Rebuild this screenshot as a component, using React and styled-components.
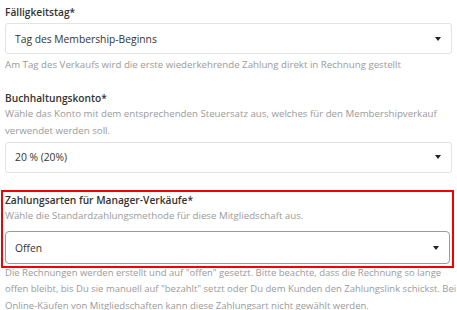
import React from "react";
import styled, { createGlobalStyle } from "styled-components";

const Global = createGlobalStyle`
  html, body { margin: 0; padding: 0; background: #fff; }
  body { font-family: "Open Sans", "Noto Sans", sans-serif; }
`;

const Page = styled.div`
  width: 457px;
  box-sizing: border-box;
  padding: 4px 5px 0 5px;
  display: flex;
  flex-direction: column;
`;

const Field = styled.section`
  display: flex;
  flex-direction: column;
  margin-top: ${(p) => p.$mt || 0}px;
  ${(p) =>
    p.$highlight &&
    `
    margin-left: -4px;
    margin-right: -2px;
    border: 2px solid #f00000;
    padding: 0 2px 2px 2px;
  `}
`;

const Label = styled.div`
  font-size: 10.2px;
  font-weight: 600;
  line-height: 16px;
  color: #333;
`;

const Desc = styled.div`
  font-size: 9.7px;
  line-height: 16.3px;
  color: #9a9a9a;
  margin-top: ${(p) => p.$mt || 0}px;
`;

const Hint = styled(Desc)`
  width: 452px;
  font-size: 9.5px;
`;

const SelectBox = styled.div`
  box-sizing: border-box;
  height: ${(p) => (p.$strong ? 33 : 31)}px;
  margin-top: ${(p) => p.$mt || 0}px;
  border: 1px solid ${(p) => (p.$strong ? "#9a9a9a" : "#e3e3e3")};
  border-radius: ${(p) => (p.$strong ? 4 : 3)}px;
  display: flex;
  align-items: center;
  justify-content: space-between;
  padding: 0 9px 0 9px;
  font-size: 10.3px;
  color: #333;
  background: #fff;
`;

const Caret = styled.span`
  width: 0;
  height: 0;
  border-left: 3.5px solid transparent;
  border-right: 3.5px solid transparent;
  border-top: 4px solid #222;
  margin-right: 1px;
`;

const Select = ({ value, strong, mt }) => (
  <SelectBox $strong={strong} $mt={mt}>
    <span>{value}</span>
    <Caret />
  </SelectBox>
);

export default function App() {
  return (
    <>
      <Global />
      <Page>
        <Field>
          <Label>Fälligkeitstag*</Label>
          <Select value="Tag des Membership-Beginns" mt={3} />
          <Desc $mt={3}>
            Am Tag des Verkaufs wird die erste wiederkehrende Zahlung direkt in
            Rechnung gestellt
          </Desc>
        </Field>
        <Field $mt={17}>
          <Label>Buchhaltungskonto*</Label>
          <Desc>
            Wähle das Konto mit dem entsprechenden Steuersatz aus, welches für
            den Membershipverkauf verwendet werden soll.
          </Desc>
          <Select value="20 % (20%)" mt={3} />
        </Field>
        <Field $mt={17} $highlight>
          <Label>Zahlungsarten für Manager-Verkäufe*</Label>
          <Desc>Wähle die Standardzahlungsmethode für diese Mitgliedschaft aus.</Desc>
          <Select value="Offen" strong mt={7} />
        </Field>
        <Hint $mt={-3}>
          Die Rechnungen werden erstellt und auf "offen" gesetzt. Bitte beachte,
          dass die Rechnung so lange offen bleibt, bis Du sie manuell auf
          "bezahlt" setzt oder Du dem Kunden den Zahlungslink schickst. Bei
          Online-Käufen von Mitgliedschaften kann diese Zahlungsart nicht
          gewählt werden.
        </Hint>
      </Page>
    </>
  );
}
